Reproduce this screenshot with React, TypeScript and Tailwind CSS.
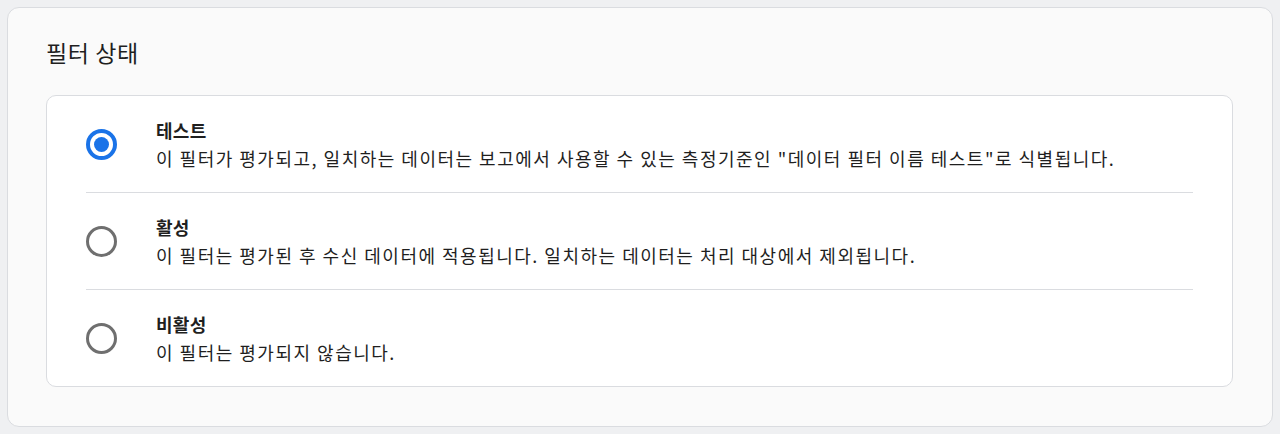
const options = [
  {
    title: "테스트",
    desc: "이 필터가 평가되고, 일치하는 데이터는 보고에서 사용할 수 있는 측정기준인 \"데이터 필터 이름 테스트\"로 식별됩니다.",
    checked: true,
  },
  {
    title: "활성",
    desc: "이 필터는 평가된 후 수신 데이터에 적용됩니다. 일치하는 데이터는 처리 대상에서 제외됩니다.",
    checked: false,
  },
  {
    title: "비활성",
    desc: "이 필터는 평가되지 않습니다.",
    checked: false,
  },
];

function Radio({ checked }: { checked: boolean }) {
  if (checked) {
    return (
      <div className="w-[31px] h-[31px] rounded-full border-4 border-[#1a73e8] flex items-center justify-center shrink-0">
        <div className="w-[15px] h-[15px] rounded-full bg-[#1a73e8]" />
      </div>
    );
  }
  return <div className="w-[31px] h-[31px] rounded-full border-[3px] border-[#6f6f6f] shrink-0" />;
}

export default function App() {
  return (
    <div
      className="min-h-screen bg-[#eff0f2] p-[7px] text-[#1f1f1f]"
      style={{ fontFamily: '"Noto Sans CJK KR", "Noto Sans", sans-serif' }}
    >
      <div className="rounded-[12px] border border-[#dadce0] bg-[#fafafa] pl-[38px] pr-[39px] pt-[30px] pb-[39px]">
        <h2 className="text-[23px] leading-[28px] font-normal tracking-[0.6px]">필터 상태</h2>

        <div className="mt-[29px] rounded-[10px] border border-[#dadce0] bg-white px-[39px]">
          {options.map((o, i) => (
            <div
              key={o.title}
              className={`flex items-center gap-[39px] py-[20px] ${i > 0 ? "border-t border-[#dadce0]" : ""}`}
            >
              <Radio checked={o.checked} />
              <div>
                <p className="text-[18px] leading-[28px] font-bold tracking-[0.3px]">{o.title}</p>
                <p className="text-[18px] leading-[28px] tracking-[1.5px]">{o.desc}</p>
              </div>
            </div>
          ))}
        </div>
      </div>
    </div>
  );
}
